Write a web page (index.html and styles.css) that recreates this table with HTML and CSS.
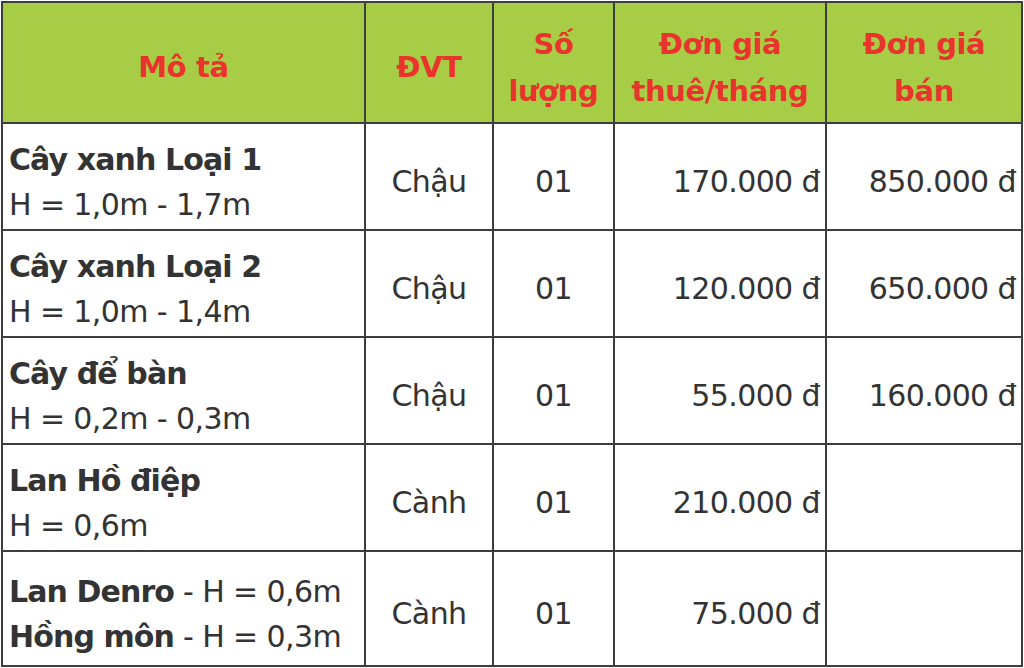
FILE: index.html
```html
<!DOCTYPE html>
<html lang="vi">
<head>
<meta charset="utf-8">
<title>Bảng giá cây xanh</title>
<link rel="stylesheet" href="styles.css">
</head>
<body>
<table class="price">
  <colgroup>
    <col class="c-desc"><col class="c-unit"><col class="c-qty"><col class="c-rent"><col class="c-sell">
  </colgroup>
  <thead>
    <tr class="head">
      <th>Mô tả</th>
      <th>ĐVT</th>
      <th>Số<br>lượng</th>
      <th>Đơn giá<br>thuê/tháng</th>
      <th>Đơn giá<br>bán</th>
    </tr>
  </thead>
  <tbody>
    <tr class="row">
      <td class="desc"><b>Cây xanh Loại 1</b><br>H = 1,0m - 1,7m</td>
      <td class="mid">Chậu</td>
      <td class="mid">01</td>
      <td class="num">170.000 đ</td>
      <td class="num">850.000 đ</td>
    </tr>
    <tr class="row">
      <td class="desc"><b>Cây xanh Loại 2</b><br>H = 1,0m - 1,4m</td>
      <td class="mid">Chậu</td>
      <td class="mid">01</td>
      <td class="num">120.000 đ</td>
      <td class="num">650.000 đ</td>
    </tr>
    <tr class="row">
      <td class="desc"><b>Cây để bàn</b><br>H = 0,2m - 0,3m</td>
      <td class="mid">Chậu</td>
      <td class="mid">01</td>
      <td class="num">55.000 đ</td>
      <td class="num">160.000 đ</td>
    </tr>
    <tr class="row">
      <td class="desc"><b>Lan Hồ điệp</b><br>H = 0,6m</td>
      <td class="mid">Cành</td>
      <td class="mid">01</td>
      <td class="num">210.000 đ</td>
      <td class="num"></td>
    </tr>
    <tr class="row last">
      <td class="desc"><b>Lan Denro</b> - H = 0,6m<br><b>Hồng môn</b> - H = 0,3m</td>
      <td class="mid">Cành</td>
      <td class="mid">01</td>
      <td class="num">75.000 đ</td>
      <td class="num"></td>
    </tr>
  </tbody>
</table>
</body>
</html>
```

FILE: styles.css
```css
html, body {
  margin: 0;
  padding: 0;
  background: #ffffff;
}
body {
  padding: 1px 0 0 1px;
  font-family: "DejaVu Sans", "Liberation Sans", sans-serif;
  color: #333333;
}
.price {
  border-collapse: collapse;
  table-layout: fixed;
  width: 1022px;
}
.c-desc { width: 363px; }
.c-unit { width: 128px; }
.c-qty { width: 121px; }
.c-rent { width: 212px; }
.c-sell { width: 196px; }

.price th, .price td {
  border: 2px solid #3d3d3d;
  padding: 10px 0 0 0;
  vertical-align: middle;
}
.head { height: 121px; }
.head th {
  background: #a6cd45;
  color: #e8342c;
  font-weight: bold;
  font-size: 29px;
  letter-spacing: -0.4px;
  line-height: 47px;
  text-align: center;
}
.row { height: 107px; }
.row.last { height: 115px; }
.row td {
  font-size: 30px;
  letter-spacing: -0.6px;
  line-height: 45px;
}
.desc {
  padding-left: 6px !important;
  text-align: left;
  white-space: nowrap;
}
.desc b {
  font-weight: bold;
  letter-spacing: -0.9px;
}
.mid {
  text-align: center;
}
.unit {
  letter-spacing: 0.6px;
}
.num {
  text-align: right;
  padding-right: 5px !important;
}
```
